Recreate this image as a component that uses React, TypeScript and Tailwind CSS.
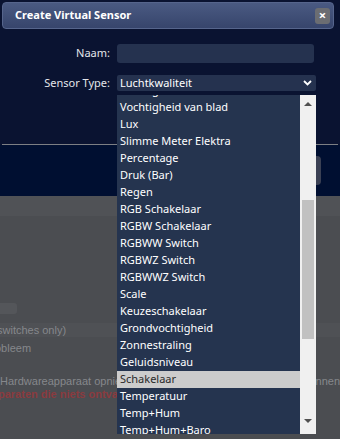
import React from "react";

const items = [
  "Vochtigheid",
  "Vochtigheid van blad",
  "Lux",
  "Slimme Meter Elektra",
  "Percentage",
  "Druk (Bar)",
  "Regen",
  "RGB Schakelaar",
  "RGBW Schakelaar",
  "RGBWW Switch",
  "RGBWZ Switch",
  "RGBWWZ Switch",
  "Scale",
  "Keuzeschakelaar",
  "Grondvochtigheid",
  "Zonnestraling",
  "Geluidsniveau",
  "Schakelaar",
  "Temperatuur",
  "Temp+Hum",
  "Temp+Hum+Baro",
];

const ui = { fontFamily: '"Noto Sans", "Open Sans", sans-serif' };
const bg = { fontFamily: '"Liberation Sans", Arial, sans-serif' };

export default function App() {
  return (
    <div className="relative w-[340px] h-[439px] overflow-hidden bg-[#4b4d51]" style={ui}>
      {/* Dialog */}
      <div className="flex flex-col h-[196px] bg-[#0a1331] rounded-br-[3px]">
        <div className="mx-[2px] mt-[2px] mr-[6px] h-[27px] rounded-[4px] border border-[#56658c] bg-gradient-to-b from-[#4a5a82] to-[#37456c] flex items-center justify-between pl-[12px] pr-[3px]">
          <span className="text-white font-bold text-[11px]">Create Virtual Sensor</span>
          <div className="w-[15px] h-[16px] rounded-[3px] bg-[#6b6d72] flex items-center justify-center text-white font-bold text-[13px] leading-none">
            ×
          </div>
        </div>
        <div className="flex-1 flex flex-col pt-[15px]">
          <div className="flex items-center h-[19px]">
            <label className="w-[110px] text-right text-[11px] text-[#e4e6ea]">Naam:</label>
            <div className="ml-[7px] w-[197px] h-[19px] rounded-[3px] bg-[#25324f]" />
          </div>
          <div className="flex items-center h-[16px] mt-[12px]">
            <label className="w-[110px] text-right text-[11px] text-[#e4e6ea]">Sensor Type:</label>
            <div className="ml-[7px] w-[199px] h-[16px] rounded-[2px] bg-[#25324f] flex items-center justify-between pl-[3px] pr-[4px]">
              <span className="text-white text-[11px]">Luchtkwaliteit</span>
              <svg width="9" height="6" viewBox="0 0 9 6">
                <path d="M1 1 L4.5 4.5 L8 1" stroke="#ffffff" strokeWidth="1.8" fill="none" />
              </svg>
            </div>
          </div>
        </div>
        <div className="mx-[2px] h-[1px] bg-[#7d7f84]" />
        <div className="h-[51px] bg-[#000f31] flex items-center justify-end pr-[19px]">
          <div className="w-[60px] h-[29px] rounded-[4px] bg-[#3b4154]" />
        </div>
      </div>

      {/* Background page under overlay */}
      <div className="flex flex-col text-[11px] text-[#86888c]" style={bg}>
        <div className="h-[20px] bg-[#505256]" />
        <div className="h-[87px]" />
        <div className="w-[17px] h-[11px] rounded-r-[3px] bg-[#54565a]" />
        <div className="h-[9px]" />
        <div className="h-[14px] bg-[#4f5155] flex items-center">
          <span className="-ml-[3px]">switches only)</span>
        </div>
        <div className="h-[4px]" />
        <div className="h-[14px] flex items-center">
          <span className="-ml-[5px]">obleem</span>
        </div>
        <div className="h-[19px]" />
        <div className="h-[14px] flex items-center justify-between whitespace-nowrap">
          <span>Hardwareapparaat opnieuw</span>
          <span>kunnen</span>
        </div>
        <div className="h-[13px] flex items-center whitespace-nowrap">
          <span className="-ml-[2px] font-bold text-[#8a3b3f]">paraten die niets ontvangen</span>
        </div>
      </div>

      {/* Dropdown list overlay */}
      <div className="absolute left-[117px] top-[95px] w-[199px] h-[339px] flex">
        <div className="flex-1 bg-[#25344f] overflow-hidden">
          <div className="flex flex-col -mt-[13px]">
            {items.map((it) => (
              <div
                key={it}
                className={
                  "h-[17px] flex items-center pl-[3px] text-[11px] whitespace-nowrap " +
                  (it === "Schakelaar" ? "bg-[#cccccc] text-[#2a2a2a]" : "text-white")
                }
              >
                {it}
              </div>
            ))}
          </div>
        </div>
        <div className="w-[16px] bg-[#f0f0f0] flex flex-col items-center">
          <div className="h-[16px] flex items-center justify-center">
            <svg width="8" height="5" viewBox="0 0 8 5">
              <path d="M0 5 L4 1 L8 5 Z" fill="#505050" />
            </svg>
          </div>
          <div className="h-[89px]" />
          <div className="w-[12px] h-[139px] bg-[#c1c1c1]" />
          <div className="flex-1" />
          <div className="h-[16px] flex items-center justify-center mb-[5px]">
            <svg width="8" height="5" viewBox="0 0 8 5">
              <path d="M0 0 L8 0 L4 4 Z" fill="#505050" />
            </svg>
          </div>
        </div>
      </div>
    </div>
  );
}
